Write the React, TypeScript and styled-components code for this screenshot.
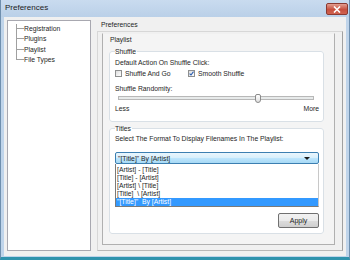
import React from "react";
import styled, { createGlobalStyle } from "styled-components";

const Global = createGlobalStyle`
  html, body { margin: 0; padding: 0; background: #ffffff; }
  body { font-family: "Liberation Sans", Arial, sans-serif; }
`;

const Window = styled.div`
  width: 350px;
  height: 260px;
  box-sizing: border-box;
  display: flex;
  flex-direction: column;
  background: #bfd4ea;
  border-left: 1px solid #6f8fae;
  border-right: 1px solid #6f8fae;
  border-bottom: 3px solid #2f93ad;
  overflow: hidden;
`;

const TitleBar = styled.div`
  height: 17px;
  flex: none;
  display: flex;
  align-items: flex-start;
  justify-content: space-between;
  padding: 0 1px 0 4px;
  background: linear-gradient(#c9dbef, #bad0e8);
`;

const TitleText = styled.span`
  font-size: 8px;
  line-height: 16px;
  color: #1c1c1c;
`;

const CloseButton = styled.div`
  width: 20px;
  height: 10px;
  margin-top: 3px;
  border-radius: 2px;
  border: 1px solid #8b3a32;
  background: linear-gradient(#e39f92, #c7503f 55%, #d0624f);
  display: flex;
  align-items: center;
  justify-content: center;
`;

const Client = styled.div`
  flex: 1;
  margin: 0 3px 1px 3px;
  background: #f0f0f0;
  display: flex;
  gap: 6px;
  padding: 3px 3px 5px 3px;
  font-size: 6.8px;
  color: #1e1e1e;
`;

const Tree = styled.div`
  width: 84px;
  flex: none;
  box-sizing: border-box;
  background: #ffffff;
  border: 1px solid #a8a8b0;
  padding-top: 3px;
`;

const TreeItem = styled.div`
  display: flex;
  align-items: center;
  height: 10.3px;
  padding-left: 8px;
  line-height: 10px;
  white-space: nowrap;
`;

const TreeBranch = styled.span<{ $last?: boolean }>`
  width: 8px;
  height: 10.3px;
  flex: none;
  box-sizing: border-box;
  border-left: 1px solid #a0a0a0;
  position: relative;
  ${(p) => (p.$last ? "height: 5px; align-self: flex-start;" : "")}
  &::after {
    content: "";
    position: absolute;
    left: 0;
    top: 4px;
    width: 7px;
    border-top: 1px solid #a0a0a0;
  }
`;

const RightColumn = styled.div`
  flex: 1;
  display: flex;
  flex-direction: column;
`;

const PageLabel = styled.div`
  height: 11px;
  line-height: 10px;
  padding-left: 4px;
`;

const Page = styled.div`
  flex: 1;
  box-sizing: border-box;
  border: 1px solid #d7d7d7;
  border-right-color: #a0a0a0;
  border-bottom-color: #b8b8b8;
  display: flex;
  padding: 1px 7px 5px 4px;
`;

const Group = styled.div`
  flex: 1;
  box-sizing: border-box;
  border: 1px solid #b0b0b0;
  border-top-color: #f0f0f0;
  background: #f4f4f4;
  padding: 0 10px 0 6px;
  display: flex;
  flex-direction: column;
`;

const GroupTitle = styled.div`
  line-height: 9px;
  padding: 1px 0 0 1px;
`;

const Fieldset = styled.fieldset<{ $h: number; $mt: number }>`
  margin: ${(p) => p.$mt}px 0 0 0;
  height: ${(p) => p.$h}px;
  box-sizing: border-box;
  border: 1px solid #d9e0e6;
  border-radius: 3px;
  padding: 0 4px 0 5px;
  background: #ffffff;
  display: flex;
  flex-direction: column;
`;

const Legend = styled.legend`
  padding: 0 1px 0 0;
  line-height: 9px;
  background: transparent;
`;

const Text = styled.div<{ $mt?: number }>`
  line-height: 9px;
  margin-top: ${(p) => p.$mt ?? 0}px;
  white-space: nowrap;
`;

const CheckRow = styled.div`
  display: flex;
  align-items: center;
  height: 9px;
  margin-top: 2px;
`;

const Check = styled.label<{ $w: number }>`
  display: flex;
  align-items: center;
  gap: 3px;
  width: ${(p) => p.$w}px;
  white-space: nowrap;
`;

const Box = styled.span`
  width: 7px;
  height: 7px;
  box-sizing: border-box;
  border: 1px solid #8e8f8f;
  background: linear-gradient(135deg, #dcdcdc, #ffffff);
  display: flex;
  align-items: center;
  justify-content: center;
`;

const SliderRow = styled.div`
  height: 10px;
  margin: 0 5px 0 3px;
  display: flex;
  align-items: center;
  position: relative;
`;

const Track = styled.div`
  flex: 1;
  height: 2px;
  border: 1px solid #b8b8b8;
  background: #e7eaea;
`;

const Thumb = styled.div`
  position: absolute;
  top: 1px;
  width: 4px;
  height: 7px;
  border: 1px solid #8a8a8a;
  border-radius: 2px 2px 3px 3px;
  background: linear-gradient(#ffffff, #e0e0e0);
`;

const Ends = styled.div`
  display: flex;
  justify-content: space-between;
  line-height: 9px;
  margin-top: 1px;
`;

const Combo = styled.div`
  height: 12px;
  box-sizing: border-box;
  margin-top: 9px;
  border: 1px solid #3c7fb1;
  border-radius: 2px;
  background: linear-gradient(#eaf6fd, #d7effc 50%, #bee6fd 51%, #a7d9f5);
  display: flex;
  align-items: center;
  justify-content: space-between;
  padding: 0 8px 0 2px;
  line-height: 9px;
`;

const Arrow = styled.span`
  width: 0;
  height: 0;
  border-left: 3px solid transparent;
  border-right: 3px solid transparent;
  border-top: 3px solid #1a1a1a;
`;

const List = styled.div`
  box-sizing: border-box;
  border: 1px solid #7a7a7a;
  border-top: none;
  border-right-color: #c8c8c8;
  background: #ffffff;
  padding-top: 2px;
`;

const ListItem = styled.div<{ $sel?: boolean }>`
  height: 8px;
  line-height: 8px;
  padding-left: 1px;
  white-space: pre;
  background: ${(p) => (p.$sel ? "#3399ff" : "transparent")};
  color: ${(p) => (p.$sel ? "#ffffff" : "#1e1e1e")};
`;

const ButtonRow = styled.div`
  display: flex;
  justify-content: flex-end;
  margin-top: 6px;
`;

const Button = styled.button`
  width: 41px;
  height: 15px;
  box-sizing: border-box;
  border: 1px solid #707070;
  border-radius: 2px;
  background: linear-gradient(#f2f2f2, #ebebeb 50%, #dddddd 51%, #cfcfcf);
  font-family: inherit;
  font-size: 7px;
  color: #1e1e1e;
  padding: 0;
`;

const treeItems = ["Registration", "Plugins", "Playlist", "File Types"];
const formats = [
  "[Artist] - [Title]",
  "[Title] - [Artist]",
  "[Artist] \\ [Title]",
  "[Title]  \\ [Artist]",
];

export default function App() {
  return (
    <>
      <Global />
      <Window>
        <TitleBar>
          <TitleText>Preferences</TitleText>
          <CloseButton>
            <svg width="8" height="7" viewBox="0 0 8 7">
              <path d="M1 0.5 L7 6.5 M7 0.5 L1 6.5" stroke="#ffffff" strokeWidth="1.6" />
            </svg>
          </CloseButton>
        </TitleBar>
        <Client>
          <Tree>
            {treeItems.map((t, i) => (
              <TreeItem key={t}>
                <TreeBranch $last={i === treeItems.length - 1} />
                <span>{t}</span>
              </TreeItem>
            ))}
          </Tree>
          <RightColumn>
            <PageLabel>Preferences</PageLabel>
            <Page>
              <Group>
                <GroupTitle>Playlist</GroupTitle>
                <Fieldset $h={75} $mt={3}>
                  <Legend>Shuffle</Legend>
                  <Text $mt={2}>Default Action On Shuffle Click:</Text>
                  <CheckRow>
                    <Check $w={73}>
                      <Box />
                      Shuffle And Go
                    </Check>
                    <Check $w={70}>
                      <Box>
                        <svg width="5" height="5" viewBox="0 0 5 5">
                          <path d="M0.6 2.6 L2 4 L4.5 0.6" stroke="#2a5db0" strokeWidth="1.1" fill="none" />
                        </svg>
                      </Box>
                      Smooth Shuffle
                    </Check>
                  </CheckRow>
                  <Text $mt={6}>Shuffle Randomity:</Text>
                  <SliderRow>
                    <Track />
                    <Thumb style={{ left: "70%" }} />
                  </SliderRow>
                  <Ends>
                    <span>Less</span>
                    <span>More</span>
                  </Ends>
                </Fieldset>
                <Fieldset $h={110} $mt={2}>
                  <Legend>Titles</Legend>
                  <Text $mt={1}>Select The Format To Display Filenames In The Playlist:</Text>
                  <Combo>
                    <span>"[Title]"  By [Artist]</span>
                    <Arrow />
                  </Combo>
                  <List>
                    {formats.map((f) => (
                      <ListItem key={f}>{f}</ListItem>
                    ))}
                    <ListItem $sel>{'"[Title]"  By [Artist]'}</ListItem>
                  </List>
                  <ButtonRow>
                    <Button>Apply</Button>
                  </ButtonRow>
                </Fieldset>
              </Group>
            </Page>
          </RightColumn>
        </Client>
      </Window>
    </>
  );
}
